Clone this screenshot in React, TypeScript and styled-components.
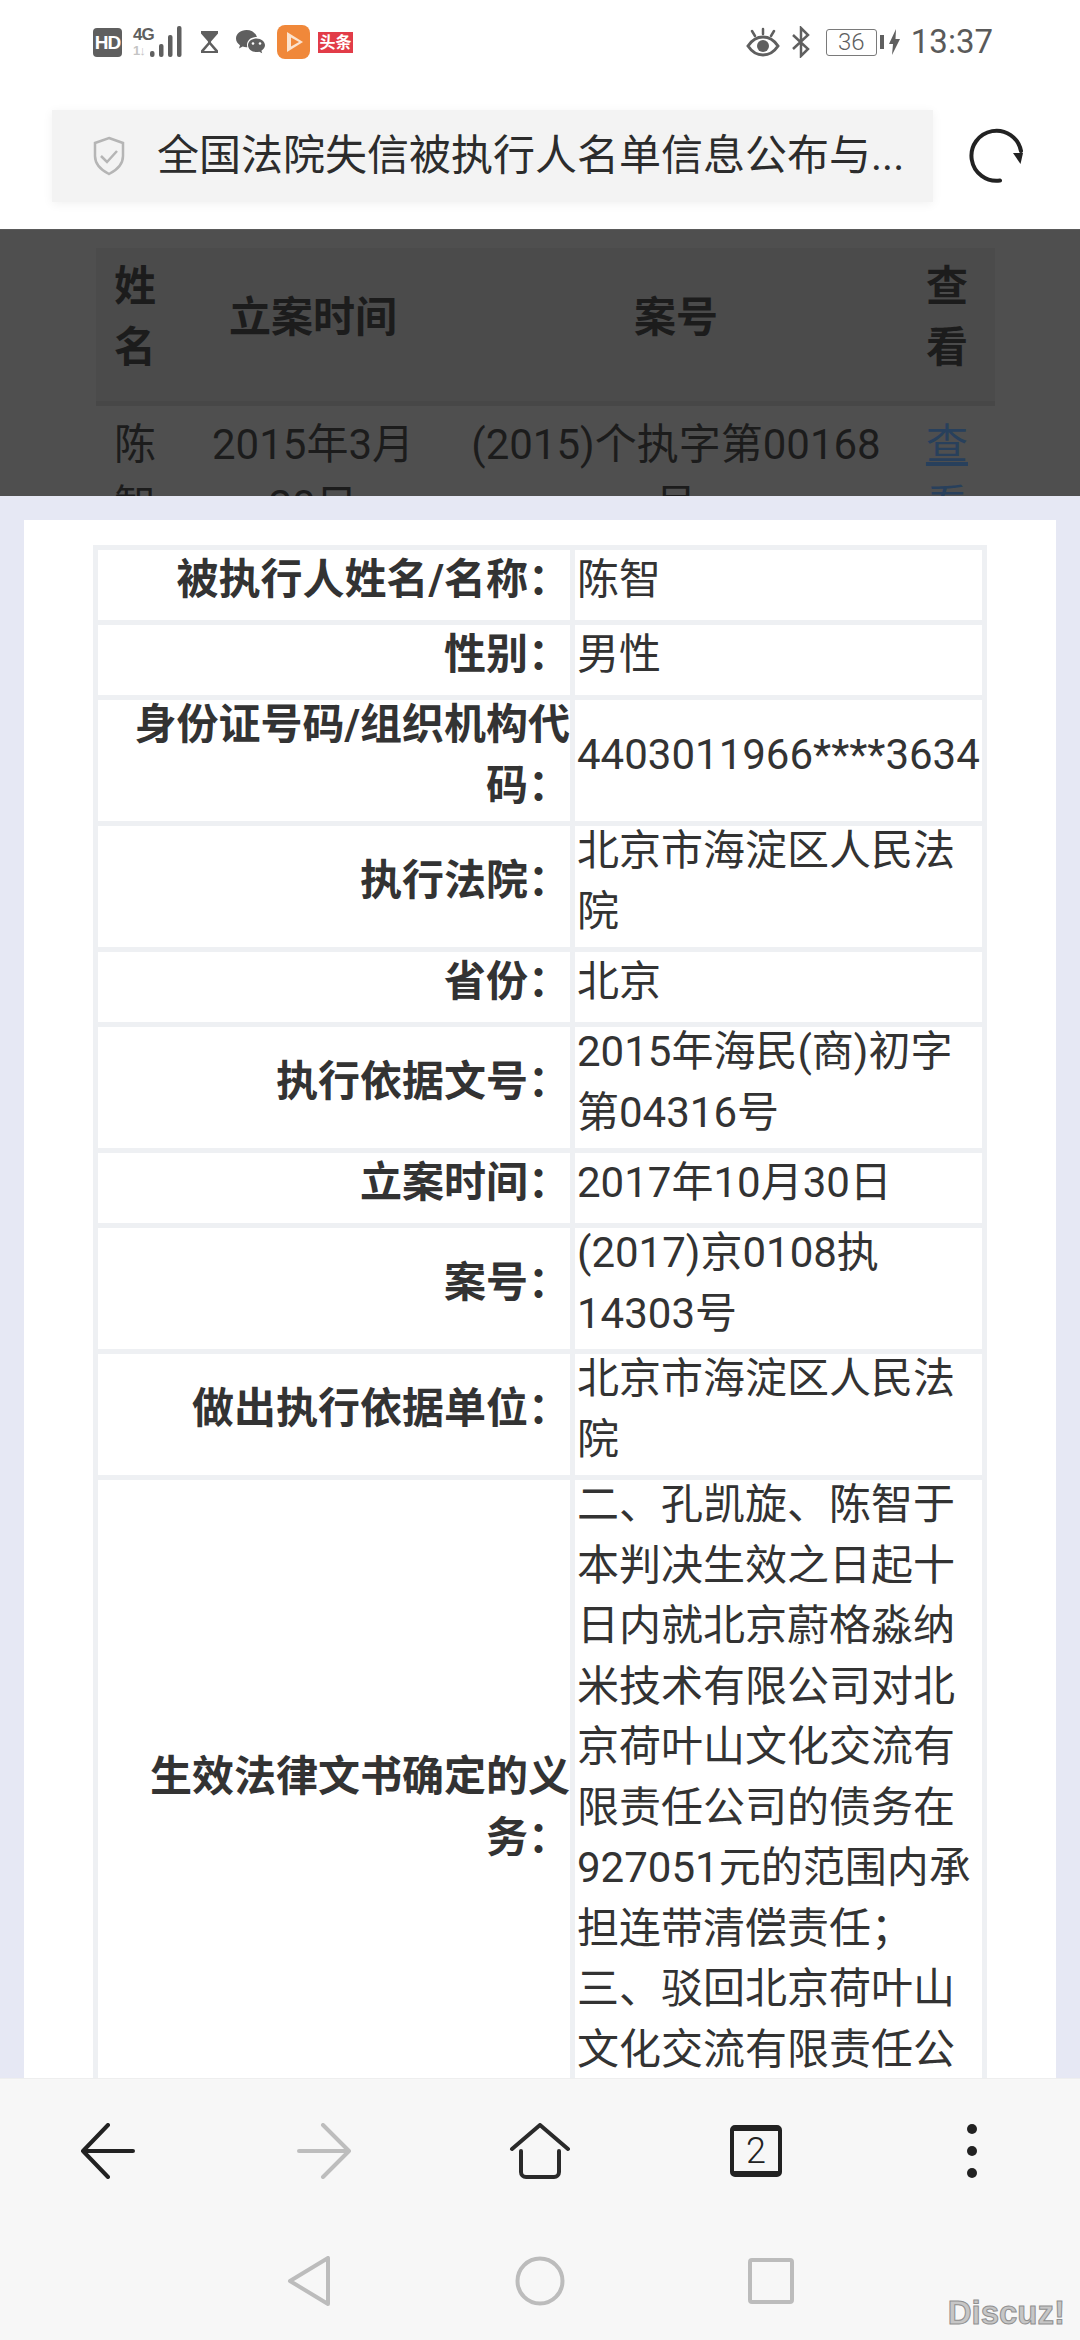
import React from "react";
import styled, { createGlobalStyle } from "styled-components";

const GlobalStyle = createGlobalStyle`
  html, body {
    margin: 0;
    padding: 0;
    background: #fff;
  }
  body {
    font-family: Roboto, "Noto Sans CJK SC", sans-serif;
  }
`;

const details: [string, string[]][] = [
  ["被执行人姓名/名称：", ["陈智"]],
  ["性别：", ["男性"]],
  ["身份证号码/组织机构代码：", ["4403011966****3634"]],
  ["执行法院：", ["北京市海淀区人民法院"]],
  ["省份：", ["北京"]],
  ["执行依据文号：", ["2015年海民(商)初字第04316号"]],
  ["立案时间：", ["2017年10月30日"]],
  ["案号：", ["(2017)京0108执14303号"]],
  ["做出执行依据单位：", ["北京市海淀区人民法院"]],
  [
    "生效法律文书确定的义务：",
    [
      "二、孔凯旋、陈智于本判决生效之日起十日内就北京蔚格淼纳米技术有限公司对北京荷叶山文化交流有限责任公司的债务在927051元的范围内承担连带清偿责任；",
      "三、驳回北京荷叶山文化交流有限责任公司的其他诉讼请求。",
    ],
  ],
];

const App = () => {
  return (
    <Screen lang="zh-CN">
      <GlobalStyle />
      <Header>
        <StatusBar>
          <StatusGroup>
            <HdBadge>HD</HdBadge>
            <Signal>
              <NetLabels>
                <NetTop>4G</NetTop>
                <NetBottom>1↓</NetBottom>
              </NetLabels>
              <svg width="32" height="32" viewBox="0 0 32 32">
                <rect x="0" y="25" width="4.5" height="6" rx="2" fill="#5f5f5f" />
                <rect x="9" y="18" width="4.5" height="13" rx="2" fill="#5f5f5f" />
                <rect x="18" y="9" width="4.5" height="22" rx="2" fill="#5f5f5f" />
                <rect x="27" y="0" width="4.5" height="31" rx="2" fill="#5f5f5f" />
              </svg>
            </Signal>
            <StatusIcon $left={18} width="19" height="24" viewBox="0 0 19 24">
              <path d="M1 1h17v2.500L11 11.500v1L18 20.500V23H1v-2.500L8 12.500v-1L1 3.500z" fill="#5f5f5f" />
              <path d="M9.500 14.500L15 21H4z" fill="#fff" />
            </StatusIcon>
            <StatusIcon $left={16} width="32" height="26" viewBox="0 0 32 26">
              <path d="M11.500 1C5.500 1 1 4.800 1 9.600c0 2.800 1.500 5 4 6.700L4 19.500l3.700-1.900c1.300.4 2.500.6 3.800.6h.8a7.500 7.500 0 0 1-.3-2.200c0-4.500 4-8 9.100-8h.8C20.800 4 16.600 1 11.500 1z" fill="#5f5f5f" />
              <path d="M21.500 9.500c-4.700 0-8.500 3-8.500 6.800s3.800 6.800 8.500 6.800c1 0 1.900-.1 2.800-.4l2.900 1.600-.8-2.600c2.100-1.300 3.600-3.200 3.600-5.400 0-3.800-3.800-6.800-8.500-6.800z" fill="#5f5f5f" />
              <circle cx="18" cy="14.500" r="1.300" fill="#fff" />
              <circle cx="25" cy="14.500" r="1.300" fill="#fff" />
            </StatusIcon>
            <StatusIcon $left={10} width="33" height="34" viewBox="0 0 33 34">
              <rect width="33" height="34" rx="8" fill="#f0883a" />
              <path d="M10 7l16 10-16 10z" fill="#fbe3cf" />
              <path d="M14 12.500l8 4.500-8 4.500z" fill="#f0883a" />
            </StatusIcon>
            <ToutiaoBadge>头条</ToutiaoBadge>
          </StatusGroup>
          <StatusGroup>
            <StatusIcon $left={0} width="34" height="30" viewBox="0 0 34 30">
              <path d="M2 19c4-6 9-9 15-9s11 3 15 9c-4 6-9 9-15 9S6 25 2 19z" fill="none" stroke="#5f5f5f" strokeWidth="3" />
              <circle cx="17" cy="19" r="6" fill="#5f5f5f" />
              <path d="M17 2v5M6 4l3 5M28 4l-3 5" stroke="#5f5f5f" strokeWidth="2.500" strokeLinecap="round" />
            </StatusIcon>
            <StatusIcon $left={11} width="20" height="32" viewBox="0 0 20 32">
              <path d="M2 9l15 14-7 7V2l7 7L2 23" fill="none" stroke="#5f5f5f" strokeWidth="2.500" />
            </StatusIcon>
            <Battery>36</Battery>
            <BatteryNub />
            <StatusIcon $left={5} width="11" height="26" viewBox="0 0 11 26">
              <path d="M7 0L0 15h4l-1 11 8-16H6.500z" fill="#5f5f5f" />
            </StatusIcon>
            <Clock>13:37</Clock>
          </StatusGroup>
        </StatusBar>
        <AddressRow>
          <AddressBar>
            <svg width="32" height="40" viewBox="0 0 32 40">
              <path d="M16 2l14 5v13c0 8.500-6 14-14 18C8 34 2 28.500 2 20V7z" fill="none" stroke="#b5b5b5" strokeWidth="2.500" />
              <path d="M8 20l6 6 10-11" fill="none" stroke="#b5b5b5" strokeWidth="2.500" />
            </svg>
            <PageTitle>全国法院失信被执行人名单信息公布与...</PageTitle>
          </AddressBar>
          <RefreshIcon width="56" height="56" viewBox="0 0 56 56">
            <path d="M31 52.500A25 25 0 1 1 52 23" fill="none" stroke="#222" strokeWidth="4" strokeLinecap="round" />
            <path d="M44 25l10 0-2.500 11z" fill="#222" />
          </RefreshIcon>
        </AddressRow>
      </Header>

      <DimmedPage>
        <ResultTable>
          <colgroup>
            <col width="77" />
            <col width="280" />
            <col width="446" />
            <col width="96" />
          </colgroup>
          <thead>
            <tr>
              <HeadCell>姓名</HeadCell>
              <HeadCell>立案时间</HeadCell>
              <HeadCell>案号</HeadCell>
              <HeadCell>查看</HeadCell>
            </tr>
          </thead>
          <tbody>
            <tr>
              <ResultCell>陈智</ResultCell>
              <ResultCell>2015年3月20日</ResultCell>
              <ResultCell>(2015)个执字第00168号</ResultCell>
              <ResultCell>
                <ViewLink href="#">查看</ViewLink>
              </ResultCell>
            </tr>
          </tbody>
        </ResultTable>
      </DimmedPage>

      <Backdrop>
        <Panel>
          <DetailTable>
            <colgroup>
              <col width="477" />
              <col width="412" />
            </colgroup>
            <tbody>
              {details.map(([label, lines]) => (
                <tr key={label}>
                  <DetailLabel>
                    <CellBody>{label}</CellBody>
                  </DetailLabel>
                  <DetailValue>
                    <CellBody>
                      {lines.map((line) => (
                        <div key={line}>{line}</div>
                      ))}
                    </CellBody>
                  </DetailValue>
                </tr>
              ))}
            </tbody>
          </DetailTable>
        </Panel>
      </Backdrop>

      <BottomBar>
        <Toolbar>
          <ToolCell>
            <svg width="56" height="56" viewBox="0 0 56 56">
              <path d="M28 2L3 28l0 0 25 26M3 28h50" fill="none" stroke="#222" strokeWidth="4" strokeLinecap="round" strokeLinejoin="round" />
            </svg>
          </ToolCell>
          <ToolCell>
            <svg width="56" height="56" viewBox="0 0 56 56">
              <path d="M27 2l26 26-26 26M3 28h50" fill="none" stroke="#bdbdbd" strokeWidth="4" strokeLinecap="round" strokeLinejoin="round" />
            </svg>
          </ToolCell>
          <ToolCell>
            <svg width="62" height="56" viewBox="0 0 62 56">
              <path d="M3 26L31 2l28 24M12 28v21a5 5 0 0 0 5 5h28a5 5 0 0 0 5-5V28" fill="none" stroke="#2a2a2a" strokeWidth="4" strokeLinecap="round" strokeLinejoin="round" />
            </svg>
          </ToolCell>
          <ToolCell>
            <TabCount>2</TabCount>
          </ToolCell>
          <ToolCell>
            <MoreDots>
              <Dot />
              <Dot />
              <Dot />
            </MoreDots>
          </ToolCell>
        </Toolbar>
        <NavBar>
          <ToolCell>
            <svg width="44" height="50" viewBox="0 0 44 50">
              <path d="M41 2v46L3 25z" fill="none" stroke="#bcbcbc" strokeWidth="4" strokeLinejoin="round" />
            </svg>
          </ToolCell>
          <ToolCell>
            <svg width="50" height="50" viewBox="0 0 50 50">
              <circle cx="25" cy="25" r="22.500" fill="none" stroke="#bcbcbc" strokeWidth="4" />
            </svg>
          </ToolCell>
          <ToolCell>
            <svg width="46" height="46" viewBox="0 0 46 46">
              <rect x="2" y="2" width="42" height="42" rx="2" fill="none" stroke="#bcbcbc" strokeWidth="4" />
            </svg>
          </ToolCell>
        </NavBar>
        <Watermark>Discuz!</Watermark>
      </BottomBar>
    </Screen>
  );
};

const Screen = styled.div`
  width: 1080px;
  height: 2340px;
  display: flex;
  flex-direction: column;
  overflow: hidden;
  position: relative;
`;

const Header = styled.header`
  height: 229px;
  flex: none;
  background: #fff;
`;

const StatusBar = styled.div`
  height: 84px;
  padding: 0 87px 0 93px;
  box-sizing: border-box;
  display: flex;
  align-items: center;
  justify-content: space-between;
`;

const StatusGroup = styled.div`
  display: flex;
  align-items: center;
`;

const StatusIcon = styled.svg<{ $left: number }>`
  display: block;
  margin-left: ${({ $left }) => $left}px;
`;

const HdBadge = styled.span`
  width: 29px;
  height: 29px;
  border-radius: 4px;
  background: #5f5f5f;
  color: #fff;
  font: 700 19px/29px "Liberation Sans", sans-serif;
  letter-spacing: -1px;
  text-align: center;
`;

const Signal = styled.div`
  display: flex;
  align-items: flex-end;
  margin-left: 11px;
`;

const NetLabels = styled.div`
  width: 17px;
  display: flex;
  flex-direction: column;
  font-family: "Liberation Sans", sans-serif;
  font-weight: 700;
  letter-spacing: -1px;
`;

const NetTop = styled.span`
  font-size: 17px;
  line-height: 17px;
  color: #5f5f5f;
  transform-origin: left;
`;

const NetBottom = styled.span`
  font-size: 13px;
  line-height: 15px;
  color: #c4c4c4;
`;

const ToutiaoBadge = styled.span`
  width: 35px;
  height: 21px;
  margin-left: 8px;
  background: #e23c48;
  color: #fff;
  font-size: 16px;
  line-height: 21px;
  font-weight: 700;
  text-align: center;
  white-space: nowrap;
`;

const Battery = styled.span`
  width: 51px;
  height: 27px;
  margin-left: 15px;
  box-sizing: border-box;
  border: 1.500px solid #7a7a7a;
  border-radius: 3px;
  color: #5f5f5f;
  font-size: 24px;
  font-weight: 300;
  line-height: 24px;
  text-align: center;
`;

const BatteryNub = styled.span`
  width: 4px;
  height: 14px;
  margin-left: 3px;
  background: #5f5f5f;
`;

const Clock = styled.span`
  margin-left: 11px;
  color: #5a5a5a;
  font-size: 33px;
  line-height: 40px;
`;

const AddressRow = styled.div`
  margin-top: 26px;
  padding-left: 52px;
  display: flex;
  align-items: center;
`;

const AddressBar = styled.div`
  width: 881px;
  height: 92px;
  padding-left: 41px;
  box-sizing: border-box;
  display: flex;
  align-items: center;
  gap: 32px;
  background: #f3f3f3;
  box-shadow: 0 2px 10px rgba(0, 0, 0, 0.06);
`;

const PageTitle = styled.div`
  color: #2c2c2c;
  font-size: 42px;
  line-height: 60px;
  white-space: nowrap;
`;

const RefreshIcon = styled.svg`
  display: block;
  margin-left: 36px;
`;

const DimmedPage = styled.section`
  height: 267px;
  flex: none;
  padding: 18px 0 0 96px;
  box-sizing: border-box;
  overflow: hidden;
  background: #4f4f4f;
  border-top: 1px solid #5a5a5a;
`;

const ResultTable = styled.table`
  width: 899px;
  table-layout: fixed;
  border-collapse: collapse;
  color: #1c1c1c;
  font-size: 42px;
  line-height: 61px;
`;

const HeadCell = styled.th`
  height: 155px;
  padding: 0 18px 14px;
  box-sizing: border-box;
  background: #4b4b4b;
  border-bottom: 5px solid #474747;
  font-weight: 700;
  text-align: center;
  vertical-align: middle;
`;

const ResultCell = styled.td`
  padding: 8px 18px 0;
  text-align: center;
  vertical-align: top;
`;

const ViewLink = styled.a`
  color: #28405c;
  text-decoration: underline;
  text-underline-offset: 3px;
`;

const Backdrop = styled.section`
  flex: 1;
  min-height: 0;
  padding: 24px 24px 0;
  background: #e6e8f4;
`;

const Panel = styled.div`
  height: 100%;
  padding: 25px 0 0 69px;
  box-sizing: border-box;
  overflow: hidden;
  background: #fff;
`;

const DetailTable = styled.table`
  width: 893px;
  table-layout: fixed;
  border-collapse: collapse;
  color: #333;
  font-size: 42px;
  line-height: 60.5px;
`;

const CellBody = styled.div`
  margin: -5px 0 5px;
`;

const DetailLabel = styled.th`
  height: 70px;
  padding: 0;
  border: 5px solid #eef0f3;
  font-weight: 700;
  text-align: right;
  vertical-align: middle;
`;

const DetailValue = styled.td`
  height: 70px;
  padding: 0 0 0 2px;
  border: 5px solid #eef0f3;
  font-weight: 400;
  text-align: left;
  vertical-align: middle;
`;

const BottomBar = styled.footer`
  height: 262px;
  flex: none;
  background: #f7f7f7;
  border-top: 1px solid #eeeeee;
  box-sizing: border-box;
`;

const Toolbar = styled.div`
  height: 143px;
  display: grid;
  grid-template-columns: repeat(5, 216px);
`;

const NavBar = styled.div`
  height: 118px;
  display: grid;
  grid-template-columns: repeat(3, 231px);
  justify-content: center;
`;

const ToolCell = styled.div`
  display: flex;
  align-items: center;
  justify-content: center;
`;

const TabCount = styled.span`
  width: 52px;
  height: 52px;
  box-sizing: border-box;
  border: 4px solid #222;
  border-top-width: 6px;
  border-bottom-width: 6px;
  border-radius: 5px;
  color: #222;
  font-size: 36px;
  font-weight: 300;
  line-height: 40px;
  text-align: center;
`;

const MoreDots = styled.div`
  display: flex;
  flex-direction: column;
  gap: 12px;
`;

const Dot = styled.span`
  width: 10px;
  height: 10px;
  border-radius: 50%;
  background: #222;
`;

const Watermark = styled.span`
  position: absolute;
  right: 15px;
  bottom: 9px;
  color: #c6c6c6;
  font: 700 33px/36px "Liberation Sans", sans-serif;
  -webkit-text-stroke: 1px #8f8f8f;
`;

export default App;
